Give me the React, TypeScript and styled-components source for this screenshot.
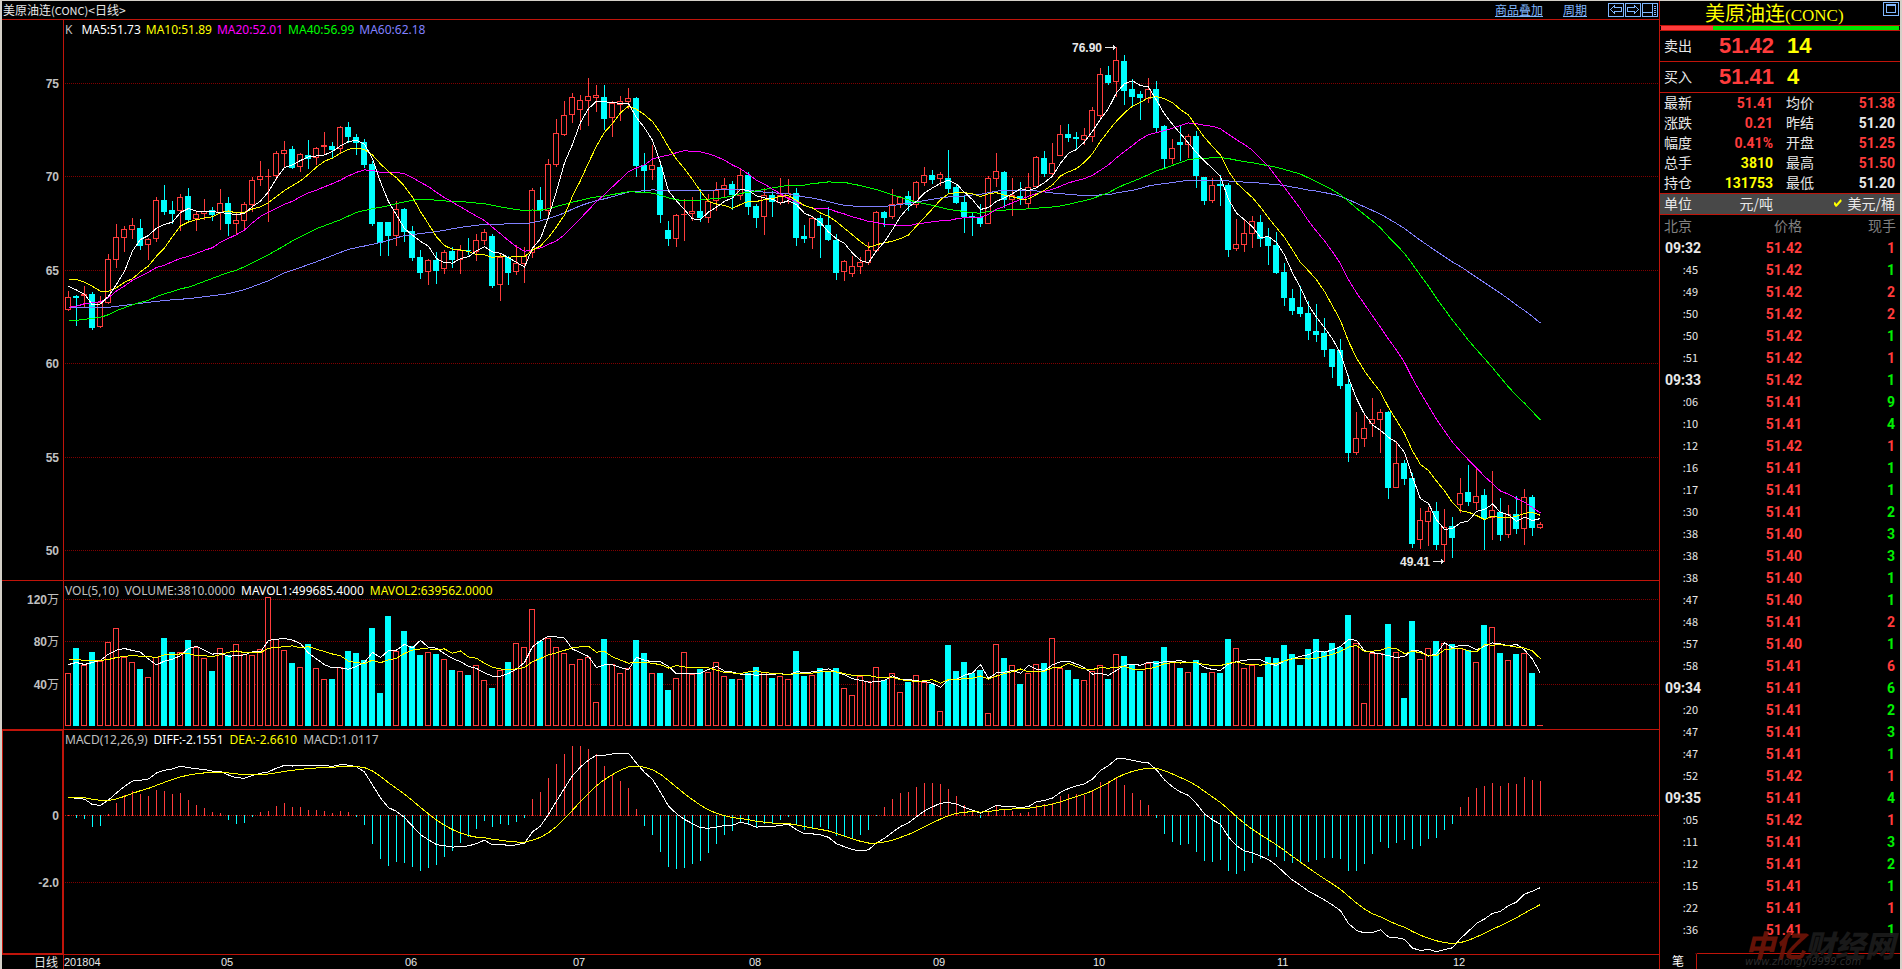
import React from "react";
import styled, { createGlobalStyle, css } from "styled-components";

/* ---------- palette ---------- */
const C = {
  line: "#c0140a",
  grid: "#800000",
  up: "#ff3c3c",
  down: "#00ffff",
  white: "#ffffff",
  text: "#e8e8e8",
  grey: "#c0c0c0",
  dim: "#808080",
  yellow: "#ffff00",
  magenta: "#ff00ff",
  green: "#00ff00",
  tickGreen: "#00f000",
  blue: "#8080ff",
  link: "#80b8ff",
  frame: "#d4d0c8",
};

const CJK = `"Noto Sans CJK SC", sans-serif`;

const GlobalStyle = createGlobalStyle`
  *, *::before, *::after { box-sizing: border-box; }
  body { margin: 0; background: #000; }
  table { border-collapse: collapse; border-spacing: 0; }
`;

/* ---------- daily candles ----------
   [direction, high, body top, body bottom, low]; levels count down the price
   ladder, one step per chart pixel. Direction 1 closes at the body top. */
type Candle = [number, number, number, number, number];
const candles: Candle[] = [
  [1, 291, 297, 310, 311], [0, 295, 296, 298, 326], [1, 286, 294, 296, 307], [0, 292, 294, 328, 330],
  [1, 296, 302, 327, 328], [1, 254, 259, 303, 304], [1, 224, 237, 260, 268], [1, 226, 229, 238, 252],
  [1, 218, 225, 230, 239], [0, 219, 228, 246, 250], [1, 238, 239, 245, 260], [1, 197, 200, 239, 242],
  [0, 185, 200, 212, 215], [0, 201, 210, 214, 224], [1, 194, 197, 211, 231], [0, 188, 196, 220, 223],
  [1, 212, 214, 219, 231], [1, 199, 211, 214, 220], [0, 207, 210, 215, 221], [1, 189, 203, 213, 230],
  [0, 197, 203, 224, 236], [1, 212, 220, 224, 235], [1, 202, 204, 221, 230], [1, 177, 180, 205, 212],
  [1, 161, 176, 180, 186], [1, 169, 176, 177, 222], [1, 151, 153, 176, 180], [1, 141, 150, 154, 168],
  [0, 146, 149, 168, 169], [1, 153, 154, 167, 172], [0, 140, 155, 159, 169], [1, 147, 148, 158, 165],
  [1, 132, 145, 147, 155], [0, 142, 146, 150, 158], [1, 126, 127, 149, 154], [0, 122, 127, 137, 143],
  [0, 134, 137, 143, 155], [0, 139, 142, 165, 168], [0, 161, 164, 224, 226], [0, 222, 222, 243, 256],
  [0, 222, 222, 236, 256], [1, 201, 209, 236, 246], [0, 208, 209, 232, 242], [0, 226, 231, 258, 261],
  [0, 250, 257, 273, 279], [1, 259, 260, 272, 285], [0, 252, 260, 271, 284], [1, 250, 252, 269, 274],
  [0, 247, 251, 260, 268], [1, 245, 250, 260, 274], [0, 238, 250, 251, 255], [1, 234, 240, 252, 261],
  [1, 229, 232, 241, 245], [0, 234, 236, 286, 288], [1, 254, 257, 285, 301], [0, 256, 257, 273, 285],
  [1, 245, 263, 272, 275], [1, 247, 256, 264, 283], [1, 188, 190, 253, 258], [0, 187, 200, 211, 219],
  [1, 159, 164, 211, 219], [1, 119, 133, 165, 167], [1, 101, 115, 135, 136], [1, 93, 97, 115, 123],
  [1, 95, 100, 110, 130], [1, 78, 96, 101, 126], [1, 85, 95, 98, 112], [0, 85, 97, 119, 130],
  [1, 101, 103, 118, 137], [1, 96, 101, 105, 121], [1, 88, 98, 102, 109], [0, 97, 98, 166, 177],
  [0, 153, 165, 171, 192], [1, 145, 165, 170, 180], [0, 161, 167, 215, 223], [0, 221, 230, 239, 246],
  [1, 214, 215, 239, 247], [1, 199, 214, 215, 241], [1, 197, 211, 214, 221], [0, 189, 211, 218, 222],
  [1, 194, 201, 218, 223], [1, 182, 190, 201, 211], [1, 178, 185, 189, 197], [0, 181, 184, 195, 210],
  [1, 168, 175, 196, 200], [0, 172, 175, 207, 215], [0, 204, 206, 218, 228], [1, 188, 195, 217, 235],
  [0, 191, 195, 202, 217], [1, 178, 195, 203, 205], [1, 179, 193, 198, 204], [0, 188, 193, 238, 246],
  [0, 225, 236, 239, 243], [1, 216, 218, 238, 249], [0, 215, 218, 226, 258], [0, 207, 225, 240, 241],
  [0, 234, 240, 273, 280], [1, 260, 261, 272, 281], [1, 256, 266, 274, 277], [1, 257, 262, 267, 274],
  [1, 242, 250, 263, 265], [1, 211, 212, 251, 252], [0, 211, 212, 218, 227], [1, 189, 204, 217, 219],
  [1, 196, 197, 204, 208], [0, 191, 196, 205, 211], [1, 181, 182, 205, 208], [1, 167, 175, 183, 186],
  [0, 170, 175, 180, 184], [1, 172, 174, 179, 186], [0, 150, 178, 189, 193], [0, 185, 187, 203, 204],
  [0, 195, 202, 217, 233], [0, 213, 216, 217, 236], [0, 204, 217, 224, 227], [1, 176, 178, 224, 224],
  [1, 153, 171, 179, 187], [0, 171, 172, 200, 208], [1, 178, 195, 200, 216], [0, 182, 196, 199, 205],
  [1, 173, 187, 204, 209], [1, 156, 157, 187, 188], [0, 151, 158, 174, 177], [1, 143, 163, 174, 175],
  [1, 125, 134, 156, 156], [0, 124, 134, 138, 142], [0, 132, 137, 139, 149], [1, 128, 135, 140, 145],
  [1, 107, 110, 137, 142], [1, 68, 74, 116, 120], [0, 66, 75, 83, 85], [1, 47, 60, 82, 97],
  [0, 55, 61, 91, 105], [0, 79, 89, 97, 107], [0, 91, 94, 98, 120], [1, 78, 89, 99, 103],
  [0, 81, 89, 128, 132], [0, 125, 126, 159, 169], [1, 139, 148, 159, 164], [0, 125, 142, 145, 161],
  [1, 134, 136, 145, 158], [0, 131, 136, 176, 188], [0, 177, 177, 201, 205], [1, 178, 185, 201, 203],
  [0, 175, 184, 186, 206], [0, 183, 185, 250, 257], [1, 219, 244, 249, 251], [1, 220, 233, 245, 252],
  [1, 216, 221, 234, 248], [0, 215, 222, 239, 247], [0, 228, 237, 246, 265], [0, 232, 245, 273, 274],
  [0, 263, 272, 298, 306], [0, 289, 298, 311, 315], [0, 286, 307, 314, 317], [0, 301, 313, 331, 340],
  [0, 304, 331, 335, 342], [0, 318, 333, 350, 357], [0, 349, 349, 367, 378], [0, 339, 350, 386, 389],
  [0, 375, 384, 453, 462], [1, 412, 438, 453, 455], [1, 415, 428, 439, 447], [1, 398, 419, 424, 437],
  [1, 409, 412, 420, 453], [0, 411, 412, 488, 499], [1, 441, 463, 488, 488], [0, 460, 463, 479, 485],
  [0, 473, 478, 544, 548], [1, 508, 520, 540, 549], [1, 507, 511, 522, 546], [0, 502, 511, 545, 550],
  [1, 509, 527, 545, 562], [0, 517, 526, 538, 558], [1, 478, 493, 505, 513], [0, 465, 492, 502, 506],
  [1, 467, 496, 503, 510], [0, 489, 495, 519, 550], [1, 471, 510, 518, 540], [0, 498, 512, 535, 541],
  [1, 505, 514, 535, 538], [0, 496, 514, 529, 534], [1, 489, 497, 529, 545], [0, 495, 497, 528, 536],
  [1, 522, 524, 528, 529],
];

/* daily volume, in bar heights */
const volumes = [
  53, 78, 61, 74, 65, 84, 98, 69, 64, 57, 49, 69, 88, 74, 74, 86, 79, 68, 55, 78,
  71, 82, 72, 71, 77, 129, 87, 76, 63, 59, 82, 58, 47, 47, 59, 75, 73, 66, 98, 33,
  110, 75, 95, 80, 71, 74, 72, 67, 56, 55, 51, 61, 46, 38, 56, 64, 83, 79, 117, 85,
  88, 79, 73, 62, 67, 69, 24, 87, 62, 53, 58, 86, 73, 53, 53, 36, 48, 74, 52, 57,
  54, 64, 50, 47, 47, 53, 59, 54, 48, 50, 47, 75, 50, 51, 58, 54, 58, 38, 31, 50,
  45, 59, 46, 53, 34, 44, 51, 44, 42, 15, 81, 55, 64, 53, 56, 13, 82, 68, 61, 42,
  53, 62, 63, 88, 58, 56, 47, 46, 55, 61, 47, 72, 70, 62, 55, 63, 65, 79, 64, 58,
  54, 66, 53, 54, 53, 87, 78, 58, 61, 49, 69, 68, 81, 72, 61, 77, 87, 75, 83, 79,
  111, 83, 23, 73, 73, 102, 74, 28, 105, 67, 78, 85, 83, 82, 78, 76, 64, 101, 99, 73,
  66, 72, 73, 53, 1,
];

/* ---------- indicator maths ---------- */
type Knot = [number, number];

/* straight-line fill between knots, for averages that reach back before the first bar */
const fillKnots = (knots: Knot[]): number[] => {
  const out: number[] = [];
  for (let k = 0; k < knots.length - 1; k++) {
    const [i0, v0] = knots[k];
    const [i1, v1] = knots[k + 1];
    for (let i = i0; i < i1; i++) out.push(v0 + ((v1 - v0) * (i - i0)) / (i1 - i0));
  }
  out.push(knots[knots.length - 1][1]);
  return out;
};

const movingAverage = (series: number[], span: number, lead: number[]): number[] =>
  series.map((_, i) =>
    i < span - 1
      ? lead[Math.min(i, lead.length - 1)]
      : series.slice(i - span + 1, i + 1).reduce((a, b) => a + b, 0) / span
  );

const ema = (series: number[], span: number, seed: number): number[] => {
  const out = [seed];
  for (let i = 1; i < series.length; i++) {
    out.push(out[i - 1] + ((series[i] - out[i - 1]) * 2) / (span + 1));
  }
  return out;
};

const PRICE_TOP = 20;
const PRICE_STEP = 18.68;
const LEVEL_75 = 83.5;
const closes = candles.map(([dir, , top, bottom]) => (dir ? top + 0.5 : bottom - 0.5));
const prices = closes.map((level) => 75 - (level - LEVEL_75) / PRICE_STEP);

const lead20 = [
  307.3, 306.3, 303.7, 302.7, 301.7, 297.7, 291, 286, 280.3, 276.3,
  272.3, 267.3, 265.3, 261.7, 258.3, 256.3, 253.3, 250.3, 247.7,
];
const lead40 = fillKnots([
  [0, 320.3], [1, 320.3], [4, 317.3], [5, 314.7], [6, 310.7], [7, 307.7], [8, 304.7], [9, 302.3],
  [10, 300.3], [11, 296.7], [12, 293.7], [13, 291.7], [14, 288.7], [15, 287.3], [20, 272.3],
  [21, 270.3], [22, 266.7], [23, 262.7], [25, 254.7], [27, 245.7], [28, 240.7], [31, 228.7],
  [34, 219.7], [36, 212.3], [38, 208.7],
]);
const lead60 = fillKnots([
  [0, 307.3], [5, 307.3], [10, 302.3], [13, 299.7], [15, 298.7], [20, 293.7], [22, 289.7],
  [23, 286.7], [25, 280.7], [27, 272.7], [28, 270.3], [31, 261.7], [35, 249.3], [38, 244.3],
  [40, 240.3], [42, 235.5], [46, 231.7], [49, 227.3], [52, 224.3], [57, 223.7], [58, 222.7],
]);

const priceLines = [
  { color: C.blue, data: movingAverage(closes, 60, lead60) },
  { color: C.green, data: movingAverage(closes, 40, lead40) },
  { color: C.magenta, data: movingAverage(closes, 20, lead20) },
  { color: C.yellow, data: movingAverage(closes, 10, [279.3, 279.3, 282.3, 286.3, 291.3, 291.3, 287.7, 282.3, 278.7]) },
  { color: C.white, data: movingAverage(closes, 5, [286.3, 290, 294.3, 305]) },
];

const volumeLines = [
  { color: C.white, data: movingAverage(volumes, 5, [62, 64, 62, 64]) },
  { color: C.yellow, data: movingAverage(volumes, 10, [67, 67, 66, 66, 66, 67, 69, 70, 71]) },
];

const slow = ema(prices, 26, 62.95);
const fast = ema(prices, 12, 63.5);
const diff = fast.map((v, i) => v - slow[i]);
const dea = ema(diff, 9, 0.545);
const histogram = diff.map((v, i) => 2 * (v - dea[i]));

/* ---------- plot geometry ---------- */
const BAR_PITCH = 8;
const VOLUME_BASE = 145;
const MACD_ZERO = 85;
const MACD_STEP = 33.4;
const barX = (i: number) => 1 + BAR_PITCH * i;
const stemX = (i: number) => 4 + BAR_PITCH * i;
const toPoints = (data: number[], y: (v: number) => number) =>
  data.map((v, i) => `${stemX(i) + 0.5},${y(v).toFixed(1)}`).join(" ");

/* ---------- frame ---------- */
const Screen = styled.div`
  display: grid;
  grid-template-columns: minmax(0, 1fr) 241px;
  min-height: 100vh;
  background: #000;
  border: solid ${C.frame};
  border-width: 1px 2px 0;
  color: ${C.text};
  font-family: ${CJK};
  overflow: hidden;
`;

const ChartArea = styled.main`
  display: flex;
  flex-direction: column;
  min-width: 0;
`;

const ChartHeader = styled.header`
  display: flex;
  align-items: center;
  height: 19px;
  padding-left: 1px;
  border-bottom: 1px solid ${C.line};
  font-size: 12px;
  line-height: 18px;
`;

const ChartTitle = styled.h1`
  flex: 1;
  margin: 0;
  font-size: 12px;
  font-weight: 400;
`;

const TitleCode = styled.span`
  font-size: 11px;
`;

const HeaderNav = styled.nav`
  display: flex;
  gap: 20px;
  margin-right: 21px;
`;

const HeaderLink = styled.a`
  color: ${C.link};
  text-decoration: underline;
`;

const IconGroup = styled.div`
  display: flex;
  gap: 1px;
  padding-right: 1px;
`;

const IconButton = styled.button`
  display: block;
  width: 16px;
  height: 14px;
  padding: 0;
  border: 0;
  background: none;
  color: ${C.link};
  cursor: pointer;

  svg {
    display: block;
  }
`;

/* ---------- chart panels ---------- */
const Panel = styled.section`
  display: grid;
  grid-template-columns: 62px minmax(0, 1fr);
  border-bottom: 1px solid ${C.line};
`;

const AxisCell = styled.div<{ $active?: boolean }>`
  border-right: 1px solid ${C.line};
  ${(p) => p.$active && css`box-shadow: inset 0 0 0 1px ${C.line};`}

  svg {
    display: block;
  }
`;

const AxisText = styled.text`
  fill: ${C.grey};
  font-family: "Liberation Sans", ${CJK};
  font-size: 12px;
  font-weight: 700;
  text-anchor: end;
`;

const AxisUnit = styled.tspan`
  font-weight: 400;
`;

const PlotCell = styled.div`
  position: relative;
  min-width: 0;
  overflow: hidden;
`;

const Plot = styled.svg`
  display: block;
  width: 100%;
  shape-rendering: crispEdges;
`;

const Legend = styled.div<{ $gap: number }>`
  position: absolute;
  top: 2px;
  left: 1px;
  display: flex;
  gap: ${(p) => p.$gap}px;
  font-family: "Noto Sans", sans-serif;
  font-size: 12px;
  line-height: 16px;
  white-space: nowrap;
`;

const LegendItem = styled.span<{ $color: string; $wide?: boolean }>`
  color: ${(p) => p.$color};
  margin-right: ${(p) => (p.$wide ? 4 : 0)}px;
`;

const MarkText = styled.text`
  fill: ${C.text};
  font-family: "Liberation Sans", sans-serif;
  font-size: 12px;
  font-weight: 700;
`;

const DateRow = styled.footer`
  display: grid;
  grid-template-columns: 62px minmax(0, 1fr);
  flex: 1;
  min-height: 14px;
`;

const PeriodCell = styled.div`
  padding-right: 5px;
  border-right: 1px solid ${C.line};
  color: ${C.text};
  font-size: 12px;
  line-height: 14px;
  text-align: right;
`;

const DateText = styled.text`
  fill: ${C.text};
  font-family: "Liberation Sans", sans-serif;
  font-size: 11px;
`;

/* ---------- quote panel ---------- */
const Quote = styled.aside`
  display: flex;
  flex-direction: column;
  position: relative;
  min-width: 0;
  border-left: 1px solid ${C.line};
`;

const QuoteHeader = styled.header`
  display: flex;
  align-items: flex-start;
  justify-content: space-between;
  height: 25px;
  padding: 1px 1px 0 45px;
  border-bottom: 1px solid ${C.line};
`;

const QuoteTitle = styled.h2`
  margin: 0;
  color: ${C.yellow};
  font-size: 20px;
  font-weight: 400;
  line-height: 21px;
  white-space: nowrap;
`;

const QuoteCode = styled.span`
  font-family: "Liberation Serif", serif;
  font-size: 17px;
`;

const RatioBar = styled.div`
  display: flex;
  height: 5px;
  padding: 0 1px;
  border-bottom: 1px solid ${C.line};
`;

const RatioPart = styled.span<{ $share: number; $color: string }>`
  flex: ${(p) => p.$share};
  background: ${(p) => p.$color};
`;

const BookRow = styled.div`
  display: grid;
  grid-template-columns: 55px 68px 1fr;
  align-items: start;
  height: 31px;
  padding-left: 4px;
  border-bottom: 1px solid ${C.line};
  font-size: 14px;
  line-height: 28px;
`;

const BookNumber = styled.strong<{ $color: string }>`
  color: ${(p) => p.$color};
  font-family: "Liberation Sans", sans-serif;
  font-size: 22px;
  line-height: 30px;
`;

const DataTable = styled.table`
  width: 100%;
  table-layout: fixed;
  font-size: 14px;
`;

const Label = styled.th`
  height: 20px;
  padding: 0 0 2px 4px;
  font-weight: 400;
  line-height: 18px;
  text-align: left;

  & ~ & {
    padding-left: 13px;
  }
`;

const Value = styled.td<{ $color: string }>`
  padding: 0;
  color: ${(p) => p.$color};
  font-family: Roboto, sans-serif;
  font-weight: 700;
  line-height: 20px;
  text-align: right;

  &:last-child {
    padding-right: 5px;
  }
`;

const UnitRow = styled.fieldset`
  display: grid;
  grid-template-columns: 40px 69px 1fr;
  align-items: start;
  height: 22px;
  min-width: 0;
  margin: 0;
  padding: 0 5px 0 4px;
  border: solid ${C.line};
  border-width: 1px 0;
  background: #484848;
  font-size: 14px;
  line-height: 18px;
`;

const UnitOption = styled.label`
  display: flex;
  align-items: center;
  justify-content: flex-end;
  gap: 6px;
  cursor: pointer;

  input {
    appearance: none;
    width: 8px;
    height: 8px;
    margin: 0;
  }

  input:checked {
    background: ${C.yellow};
    clip-path: polygon(0 40%, 22% 40%, 36% 62%, 88% 4%, 100% 14%, 100% 30%, 40% 96%, 26% 96%, 0 60%);
  }
`;

const TickTable = styled.table`
  width: 100%;
  table-layout: fixed;
`;

const TickHead = styled.th`
  height: 22px;
  padding: 0 0 2px;
  color: ${C.dim};
  font-size: 14px;
  font-weight: 400;
  line-height: 20px;
  text-align: right;

  &:first-child {
    padding-left: 4px;
    text-align: left;
  }

  &:last-child {
    padding-right: 4px;
  }
`;

const TickTime = styled.td<{ $minute: boolean }>`
  height: 22px;
  padding: 0 0 0 5px;
  font-family: Roboto, sans-serif;
  font-size: 14px;
  font-weight: 700;
  line-height: 22px;

  ${(p) =>
    !p.$minute &&
    css`
      padding: 0 4px 2px 0;
      font-family: "Noto Sans CJK SC", sans-serif;
      font-size: 11px;
      font-weight: 400;
      line-height: 20px;
      text-align: right;
    `}
`;

const TickNumber = styled.td<{ $color: string }>`
  padding: 0;
  color: ${(p) => p.$color};
  font-family: Roboto, sans-serif;
  font-size: 14px;
  font-weight: 700;
  line-height: 22px;
  text-align: right;

  &:last-child {
    padding-right: 5px;
  }
`;

const TabStrip = styled.div`
  display: flex;
  flex: 1;
  align-items: stretch;
  margin-top: 12px;
  min-height: 15px;
`;

const Tab = styled.button`
  width: 37px;
  padding: 0;
  border: solid ${C.line};
  border-width: 0 1px 0 0;
  border-top-right-radius: 2px;
  background: none;
  color: ${C.white};
  font-family: ${CJK};
  font-size: 12px;
  line-height: 14px;
  text-align: center;
`;

const TabRest = styled.div`
  flex: 1;
  border-top: 1px solid ${C.line};
`;

const Watermark = styled.div`
  position: absolute;
  right: 5px;
  bottom: 2px;
  font-style: italic;
  opacity: 0.9;
  pointer-events: none;
  white-space: nowrap;
`;

const WatermarkName = styled.div`
  color: #1c1c1c;
  font-size: 30px;
  font-weight: 900;
  line-height: 26px;

  em {
    color: #701408;
  }
`;

const WatermarkUrl = styled.div`
  color: #303030;
  font-family: "DejaVu Sans", sans-serif;
  font-size: 10px;
  line-height: 10px;
`;

/* ---------- data for the quote panel ---------- */
const UP = C.up;
const quoteRows: [string, string, string, string, string, string][] = [
  ["最新", "51.41", UP, "均价", "51.38", UP],
  ["涨跌", "0.21", UP, "昨结", "51.20", C.text],
  ["幅度", "0.41%", UP, "开盘", "51.25", UP],
  ["总手", "3810", C.yellow, "最高", "51.50", UP],
  ["持仓", "131753", C.yellow, "最低", "51.20", C.text],
];

/* time, price, lots, bought (b) or sold (s) */
const ticks = `
09:32 51.42 1 b|:45 51.42 1 s|:49 51.42 2 b|:50 51.42 2 b|:50 51.42 1 s|:51 51.42 1 b|
09:33 51.42 1 s|:06 51.41 9 s|:10 51.41 4 s|:12 51.42 1 b|:16 51.41 1 s|:17 51.41 1 s|
:30 51.41 2 s|:38 51.40 3 s|:38 51.40 3 s|:38 51.40 1 s|:47 51.40 1 s|:48 51.41 2 b|
:57 51.40 1 s|:58 51.41 6 b|09:34 51.41 6 s|:20 51.41 2 s|:47 51.41 3 s|:47 51.41 1 s|
:52 51.42 1 b|09:35 51.41 4 s|:05 51.42 1 b|:11 51.41 3 s|:12 51.41 2 s|:15 51.41 1 s|
:22 51.41 1 b|:36 51.41 1 s`
  .split("|")
  .map((row) => row.trim().split(" "));

const months: [string, number][] = [
  ["05", 20], ["06", 43], ["07", 64], ["08", 86], ["09", 109], ["10", 129], ["11", 152], ["12", 174],
];

/* ---------- chart parts ---------- */
const GridLine = ({ y, color = C.grid }: { y: number; color?: string }) => (
  <line x1="1" x2="100%" y1={y + 0.5} y2={y + 0.5} stroke={color} strokeDasharray="1 1" />
);

type Mark = [string, number, string?];

const Axis = ({ height, marks, active }: { height: number; marks: Mark[]; active?: boolean }) => (
  <AxisCell $active={active}>
    <svg width="61" height={height}>
      {marks.map(([label, y, unit]) => (
        <AxisText key={label} x="57" y={y + 5}>
          {label}
          {unit && <AxisUnit>{unit}</AxisUnit>}
        </AxisText>
      ))}
    </svg>
  </AxisCell>
);

const Arrow = ({ x, y }: { x: number; y: number }) => (
  <path
    d={`M${x} ${y}h11v1h-11z M${x + 8} ${y - 2}h1v5h-1z M${x + 9} ${y - 1}h1v3h-1z`}
    fill={C.text}
  />
);

const Series = ({ points, color }: { points: string; color: string }) => (
  <polyline points={points} fill="none" stroke={color} strokeWidth="1" />
);

const Bar = ({ x, top, bottom, up }: { x: number; top: number; bottom: number; up: boolean }) => {
  const h = bottom - top;
  return up && h > 1 ? (
    <rect x={x + 0.5} y={top + 0.5} width="5" height={h - 1} fill="#000" stroke={C.up} />
  ) : (
    <rect x={x} y={top} width="6" height={h} fill={up ? C.up : C.down} />
  );
};

const priceMarks: Mark[] = [
  ["75", 63], ["70", 156], ["65", 250], ["60", 343], ["55", 437], ["50", 530],
];
const volumeMarks: Mark[] = [["120", 18, "万"], ["80", 60, "万"], ["40", 103, "万"]];
const macdMarks: Mark[] = [["0", 85], ["-2.0", 152]];

const PricePanel = () => (
  <Panel>
    <Axis height={560} marks={priceMarks} />
    <PlotCell>
      <Plot height="560" role="img" aria-label="日线 K 线图">
        {priceMarks.map(([label, y]) => (
          <GridLine key={label} y={y} />
        ))}
        {candles.map(([dir, high, top, bottom, low], i) => {
          const fill = dir ? C.up : C.down;
          return (
            <g key={i}>
              <rect x={stemX(i)} y={high - PRICE_TOP} width="1" height={top - high} fill={fill} />
              <rect x={stemX(i)} y={bottom - PRICE_TOP} width="1" height={low - bottom} fill={fill} />
              <Bar x={barX(i)} top={top - PRICE_TOP} bottom={bottom - PRICE_TOP} up={dir === 1} />
            </g>
          );
        })}
        {priceLines.map((l) => (
          <Series key={l.color} color={l.color} points={toPoints(l.data, (v) => v - PRICE_TOP)} />
        ))}
        <MarkText x="1008" y="32">76.90</MarkText>
        <Arrow x={1041} y={27} />
        <MarkText x="1336" y="546">49.41</MarkText>
        <Arrow x={1369} y={541} />
      </Plot>
      <Legend $gap={5}>
        <LegendItem $color={C.grey} $wide>K</LegendItem>
        <LegendItem $color={C.white}>MA5:51.73</LegendItem>
        <LegendItem $color={C.yellow}>MA10:51.89</LegendItem>
        <LegendItem $color={C.magenta}>MA20:52.01</LegendItem>
        <LegendItem $color={C.green}>MA40:56.99</LegendItem>
        <LegendItem $color={C.blue}>MA60:62.18</LegendItem>
      </Legend>
    </PlotCell>
  </Panel>
);

const VolumePanel = () => (
  <Panel>
    <Axis height={148} marks={volumeMarks} />
    <PlotCell>
      <Plot height="148" role="img" aria-label="成交量">
        {volumeMarks.map(([label, y]) => (
          <GridLine key={label} y={y} />
        ))}
        {volumes.map((h, i) => (
          <Bar key={i} x={barX(i)} top={VOLUME_BASE - h} bottom={VOLUME_BASE} up={candles[i][0] === 1} />
        ))}
        {volumeLines.map((l) => (
          <Series key={l.color} color={l.color} points={toPoints(l.data, (v) => VOLUME_BASE - v + 0.5)} />
        ))}
      </Plot>
      <Legend $gap={6}>
        <LegendItem $color={C.grey}>VOL(5,10)</LegendItem>
        <LegendItem $color={C.grey}>VOLUME:3810.0000</LegendItem>
        <LegendItem $color={C.white}>MAVOL1:499685.4000</LegendItem>
        <LegendItem $color={C.yellow}>MAVOL2:639562.0000</LegendItem>
      </Legend>
    </PlotCell>
  </Panel>
);

const MacdPanel = () => (
  <Panel>
    <Axis height={224} marks={macdMarks} active />
    <PlotCell>
      <Plot height="224" role="img" aria-label="MACD">
        <GridLine y={MACD_ZERO} color={C.line} />
        <GridLine y={152} />
        {histogram.map((v, i) => {
          const h = Math.round(Math.abs(v) * MACD_STEP) + 1;
          return (
            <rect
              key={i}
              x={stemX(i)}
              y={v >= 0 ? MACD_ZERO + 1 - h : MACD_ZERO}
              width="1"
              height={h}
              fill={v >= 0 ? C.up : C.down}
            />
          );
        })}
        <Series color={C.white} points={toPoints(diff, (v) => MACD_ZERO + 0.5 - v * MACD_STEP)} />
        <Series color={C.yellow} points={toPoints(dea, (v) => MACD_ZERO + 0.5 - v * MACD_STEP)} />
      </Plot>
      <Legend $gap={6}>
        <LegendItem $color={C.grey}>MACD(12,26,9)</LegendItem>
        <LegendItem $color={C.white}>DIFF:-2.1551</LegendItem>
        <LegendItem $color={C.yellow}>DEA:-2.6610</LegendItem>
        <LegendItem $color={C.grey}>MACD:1.0117</LegendItem>
      </Legend>
    </PlotCell>
  </Panel>
);

const HeaderIcons = () => (
  <IconGroup>
    <IconButton type="button" aria-label="向左">
      <svg width="16" height="14" fill="none" stroke="currentColor" shapeRendering="crispEdges">
        <rect x="0.5" y="0.5" width="15" height="13" />
        <path d="M2.5 6.5L6.5 2.5V4.5H13.5V8.5H6.5V10.5Z" />
      </svg>
    </IconButton>
    <IconButton type="button" aria-label="向右">
      <svg width="16" height="14" fill="none" stroke="currentColor" shapeRendering="crispEdges">
        <rect x="0.5" y="0.5" width="15" height="13" />
        <path d="M13.5 6.5L9.5 2.5V4.5H2.5V8.5H9.5V10.5Z" />
      </svg>
    </IconButton>
    <IconButton type="button" aria-label="版面">
      <svg width="16" height="14" fill="none" stroke="currentColor" shapeRendering="crispEdges">
        <rect x="0.5" y="0.5" width="15" height="13" />
        <path d="M1 9.5H10M10.5 1V13M12 3.5H14M12 5.5H14M12 7.5H14M12 9.5H14M12 11.5H14" />
      </svg>
    </IconButton>
  </IconGroup>
);

const QuotePanel = () => (
  <Quote>
    <QuoteHeader>
      <QuoteTitle>
        美原油连<QuoteCode>(CONC)</QuoteCode>
      </QuoteTitle>
      <IconButton type="button" aria-label="窗口">
        <svg width="16" height="14" fill="none" stroke="currentColor" shapeRendering="crispEdges">
          <rect x="0.5" y="0.5" width="15" height="13" />
          <path d="M3.5 2.5H12.5V10.5H3.5ZM3.5 3.5H12.5" />
        </svg>
      </IconButton>
    </QuoteHeader>
    <RatioBar>
      <RatioPart $share={52} $color={C.up} />
      <RatioPart $share={186} $color="#00e600" />
    </RatioBar>
    <BookRow>
      <span>卖出</span>
      <BookNumber $color={C.up}>51.42</BookNumber>
      <BookNumber $color={C.yellow}>14</BookNumber>
    </BookRow>
    <BookRow>
      <span>买入</span>
      <BookNumber $color={C.up}>51.41</BookNumber>
      <BookNumber $color={C.yellow}>4</BookNumber>
    </BookRow>
    <DataTable>
      <colgroup>
        <col width="44" />
        <col width="69" />
        <col width="48" />
        <col />
      </colgroup>
      <tbody>
        {quoteRows.map(([l1, v1, c1, l2, v2, c2]) => (
          <tr key={l1}>
            <Label scope="row">{l1}</Label>
            <Value $color={c1}>{v1}</Value>
            <Label scope="row">{l2}</Label>
            <Value $color={c2}>{v2}</Value>
          </tr>
        ))}
      </tbody>
    </DataTable>
    <UnitRow aria-label="单位">
      <span>单位</span>
      <UnitOption>
        <input type="radio" name="unit" />
        元/吨
      </UnitOption>
      <UnitOption>
        <input type="radio" name="unit" defaultChecked />
        美元/桶
      </UnitOption>
    </UnitRow>
    <TickTable>
      <colgroup>
        <col width="42" />
        <col width="100" />
        <col />
      </colgroup>
      <thead>
        <tr>
          <TickHead scope="col">北京</TickHead>
          <TickHead scope="col">价格</TickHead>
          <TickHead scope="col">现手</TickHead>
        </tr>
      </thead>
      <tbody>
        {ticks.map(([time, price, lots, side], i) => (
          <tr key={i}>
            <TickTime $minute={time.length > 3}>{time}</TickTime>
            <TickNumber $color={C.up}>{price}</TickNumber>
            <TickNumber $color={side === "b" ? C.up : C.tickGreen}>{lots}</TickNumber>
          </tr>
        ))}
      </tbody>
    </TickTable>
    <TabStrip>
      <Tab type="button">笔</Tab>
      <TabRest />
    </TabStrip>
    <Watermark>
      <WatermarkName>
        <em>中亿</em>财经网
      </WatermarkName>
      <WatermarkUrl>www.zhongyi9999.com</WatermarkUrl>
    </Watermark>
  </Quote>
);

export default function App() {
  return (
    <>
      <GlobalStyle />
      <Screen>
        <ChartArea>
          <ChartHeader>
            <ChartTitle>
              美原油连<TitleCode>(CONC)</TitleCode>&lt;日线&gt;
            </ChartTitle>
            <HeaderNav>
              <HeaderLink href="#overlay">商品叠加</HeaderLink>
              <HeaderLink href="#period">周期</HeaderLink>
            </HeaderNav>
            <HeaderIcons />
          </ChartHeader>
          <PricePanel />
          <VolumePanel />
          <MacdPanel />
          <DateRow>
            <PeriodCell>日线</PeriodCell>
            <Plot height="14" role="img" aria-label="月份">
              <DateText x="0" y="11">201804</DateText>
              {months.map(([label, i]) => (
                <DateText key={label} x={BAR_PITCH * i - 3} y="11">
                  {label}
                </DateText>
              ))}
            </Plot>
          </DateRow>
        </ChartArea>
        <QuotePanel />
      </Screen>
    </>
  );
}
